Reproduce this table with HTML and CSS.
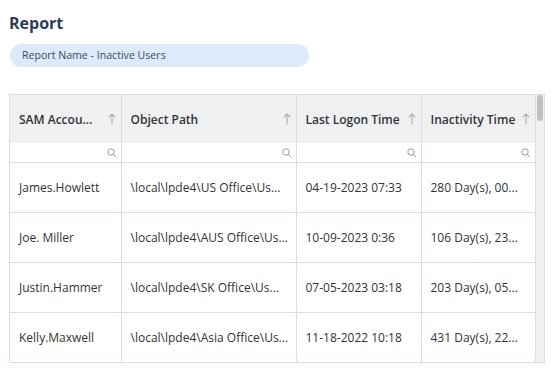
FILE: index.html
```html
<!DOCTYPE html>
<html lang="en">
<head>
  <meta charset="UTF-8">
  <meta name="viewport" content="width=device-width, initial-scale=1.0">
  <title>Report</title>
  <link rel="stylesheet" href="styles.css">
</head>
<body>
  <div class="report">
    <h1 class="title">Report</h1>
    <div class="report-name">Report Name - Inactive Users</div>

    <div class="grid-box">
      <table class="grid">
        <colgroup>
          <col class="c-sam">
          <col class="c-path">
          <col class="c-logon">
          <col class="c-inact">
        </colgroup>
        <thead>
          <tr class="head">
            <th><div class="th"><span class="th-text">SAM Accou...</span><svg class="sort" viewBox="0 0 8 12"><path d="M4 11.5V1M0.8 4.2L4 1l3.2 3.2"/></svg></div></th>
            <th><div class="th"><span class="th-text">Object Path</span><svg class="sort" viewBox="0 0 8 12"><path d="M4 11.5V1M0.8 4.2L4 1l3.2 3.2"/></svg></div></th>
            <th><div class="th"><span class="th-text">Last Logon Time</span><svg class="sort" viewBox="0 0 8 12"><path d="M4 11.5V1M0.8 4.2L4 1l3.2 3.2"/></svg></div></th>
            <th><div class="th"><span class="th-text">Inactivity Time</span><svg class="sort" viewBox="0 0 8 12"><path d="M4 11.5V1M0.8 4.2L4 1l3.2 3.2"/></svg></div></th>
          </tr>
          <tr class="filter">
            <td><svg class="search" viewBox="0 0 10 10"><circle cx="4" cy="4" r="3.2"/><path d="M6.3 6.3L9.2 9.2"/></svg></td>
            <td><svg class="search" viewBox="0 0 10 10"><circle cx="4" cy="4" r="3.2"/><path d="M6.3 6.3L9.2 9.2"/></svg></td>
            <td><svg class="search" viewBox="0 0 10 10"><circle cx="4" cy="4" r="3.2"/><path d="M6.3 6.3L9.2 9.2"/></svg></td>
            <td><svg class="search" viewBox="0 0 10 10"><circle cx="4" cy="4" r="3.2"/><path d="M6.3 6.3L9.2 9.2"/></svg></td>
          </tr>
        </thead>
        <tbody>
          <tr>
            <td>James.Howlett</td>
            <td>\local\lpde4\US Office\Us...</td>
            <td>04-19-2023 07:33</td>
            <td>280 Day(s), 00...</td>
          </tr>
          <tr>
            <td>Joe. Miller</td>
            <td>\local\lpde4\AUS Office\Us...</td>
            <td>10-09-2023 0:36</td>
            <td>106 Day(s), 23...</td>
          </tr>
          <tr>
            <td>Justin.Hammer</td>
            <td>\local\lpde4\SK Office\Us...</td>
            <td>07-05-2023 03:18</td>
            <td>203 Day(s), 05...</td>
          </tr>
          <tr>
            <td>Kelly.Maxwell</td>
            <td>\local\lpde4\Asia Office\Us...</td>
            <td>11-18-2022 10:18</td>
            <td>431 Day(s), 22...</td>
          </tr>
        </tbody>
      </table>
      <div class="scrollbar"><div class="thumb"></div></div>
    </div>
  </div>
</body>
</html>
```
FILE: styles.css
```css
body {
  margin: 0;
  background: #fff;
  font-family: "Open Sans", "Noto Sans", sans-serif;
  color: #333;
}

.report {
  padding: 11px 0 0 9px;
}

.title {
  margin: 0;
  font-size: 16px;
  font-weight: 700;
  line-height: 24px;
  color: #2b3b58;
}

.report-name {
  margin: 9px 0 0 1px;
  width: 287px;
  height: 23px;
  padding-left: 12px;
  border-radius: 12px;
  background: #deeaf9;
  color: #3b4a5e;
  font-size: 10.6px;
  line-height: 23px;
}

.grid-box {
  display: flex;
  width: 534px;
  margin-top: 27px;
  border: 1px solid #e4d8dc;
}

.grid {
  width: 525px;
  border-collapse: collapse;
  table-layout: fixed;
  font-size: 12px;
}

.c-sam { width: 111px; }
.c-path { width: 175px; }
.c-logon { width: 125px; }
.c-inact { width: 114px; }

.grid th,
.grid td {
  padding: 0;
  border-right: 1px solid #e4d8dc;
}

.grid th:last-child,
.grid td:last-child {
  border-right: none;
}

.head th {
  height: 48px;
  background: #eff0f2;
  text-align: left;
  font-weight: 600;
  color: #333;
}

.th {
  display: flex;
  align-items: center;
  padding: 0 5px 0 9px;
}

.th-text {
  flex: 1;
  min-width: 0;
  overflow: hidden;
  white-space: nowrap;
  text-overflow: ellipsis;
}

.sort {
  width: 8px;
  height: 12px;
  flex: none;
  margin-left: 2px;
  fill: none;
  stroke: #a9aaac;
  stroke-width: 1.1;
}

.filter td {
  height: 19px;
  text-align: right;
  border-bottom: 1px solid #e4d8dc;
  line-height: 0;
}

.search {
  width: 10px;
  height: 10px;
  margin: 0 4px 0 0;
  vertical-align: middle;
  fill: none;
  stroke: #8c8d90;
  stroke-width: 0.9;
}

.grid tbody td {
  height: 49px;
  padding: 0 6px 0 9px;
  border-bottom: 1px solid #e4d8dc;
  white-space: nowrap;
  overflow: hidden;
  text-overflow: ellipsis;
  color: #333;
}

.grid tbody tr:last-child td {
  border-bottom: none;
}

.scrollbar {
  width: 9px;
  background: #f1f1f1;
  border-left: 1px solid #e4d8dc;
}

.thumb {
  width: 6px;
  height: 26px;
  margin: 0 0 0 1px;
  border-radius: 3px;
  background: #c1c1c1;
}
```
